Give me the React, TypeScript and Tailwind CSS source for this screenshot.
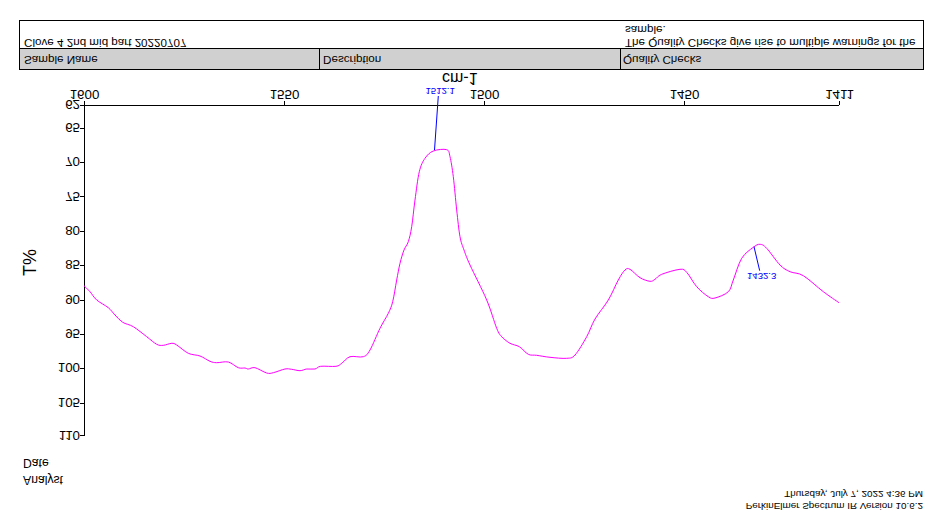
// The scan is upside down, so the page is laid out in reading order and flipped once at the root.
const H = 454; // screen y of the chart's natural top edge

// trace, in reference (screen) coordinates
const trace: [number, number][] = [
  [84, 285.7], [90, 291.7], [96.7, 300], [108.3, 307.7], [115, 315], [122.7, 322.3], [133.3, 326.7],
  [146.7, 336.7], [156.7, 344.3], [163.3, 345.3], [171.7, 343.3], [176.7, 345], [188.3, 353.3], [200, 356],
  [210, 361.3], [216.7, 362.7], [228.3, 362], [238.3, 367.7], [245, 368], [248.3, 369], [255, 367.7],
  [266.7, 373], [273.3, 372.7], [285, 369], [291.7, 369.3], [300, 370.7], [306.7, 369], [315, 369],
  [320.7, 366.3], [336, 366.3], [341.7, 363.3], [350, 356.7], [363.3, 356.7], [370, 350], [380, 328.3],
  [388.3, 313.3], [392.7, 301.7], [396.7, 280], [400, 263.3], [404, 250], [408.3, 241.7], [411.7, 226.7],
  [415, 200], [419.3, 171.7], [425, 158.3], [433.3, 151], [446.7, 149.7], [450, 156.7], [453.3, 176.7],
  [456.7, 210], [460, 236.7], [464, 250], [470, 265], [486.7, 300], [496.7, 328.3], [501.7, 336.7],
  [510, 343.3], [519.3, 346.7], [528.3, 354.3], [536.7, 355.3], [550, 357.3], [566.7, 358.3], [575, 355],
  [586.7, 336.7], [595, 319], [608.3, 300], [618.3, 280], [625, 270], [630, 269.3], [640, 277.7],
  [650, 281.3], [655, 279.3], [661.7, 274.3], [680, 269.3], [686.7, 272.3], [696.7, 286.7], [708.3, 296.7],
  [715, 298], [728.3, 291.7], [733.3, 280], [741.7, 258.3], [753.3, 247.3], [760, 244.3], [766.7, 248.3],
  [780, 265], [790, 271.7], [803.3, 275.7], [823.3, 291.7], [839, 302.7],
];

function smoothPath(points: [number, number][]) {
  let d = `M${points[0][0]} ${H - points[0][1]}`;
  for (let i = 0; i < points.length - 1; i++) {
    const p0 = points[i - 1] ?? points[i];
    const p1 = points[i];
    const p2 = points[i + 1];
    const p3 = points[i + 2] ?? p2;
    const c1x = p1[0] + (p2[0] - p0[0]) / 6;
    const c1y = p1[1] + (p2[1] - p0[1]) / 6;
    const c2x = p2[0] - (p3[0] - p1[0]) / 6;
    const c2y = p2[1] - (p3[1] - p1[1]) / 6;
    d += ` C${c1x} ${H - c1y} ${c2x} ${H - c2y} ${p2[0]} ${H - p2[1]}`;
  }
  return d;
}

const xTicks = [
  { x: 84, label: "1600" },
  { x: 284, label: "1550" },
  { x: 484, label: "1500" },
  { x: 684, label: "1450" },
  { x: 839, label: "1411" },
];

const yTicks = [
  { y: 105, label: "62" },
  { y: 128, label: "65" },
  { y: 162, label: "70" },
  { y: 196.7, label: "75" },
  { y: 231, label: "80" },
  { y: 265, label: "85" },
  { y: 300, label: "90" },
  { y: 334, label: "95" },
  { y: 368, label: "100" },
  { y: 403, label: "105" },
  { y: 435.3, label: "110" },
];

function Chart() {
  return (
    <svg width={936} height={384} viewBox="0 0 936 384" className="block flex-none">
      <g stroke="#000" strokeWidth={1} shapeRendering="crispEdges">
        <line x1={84.5} y1={H - 105} x2={84.5} y2={H - 435.5} />
        <line x1={84} y1={H - 105.5} x2={839} y2={H - 105.5} />
        {xTicks.map((t) => (
          <line key={t.label} x1={t.x + 0.5} y1={H - 105} x2={t.x + 0.5} y2={H - 101} />
        ))}
        {yTicks.map((t) => (
          <line key={t.label} x1={80} y1={H - t.y} x2={84} y2={H - t.y} />
        ))}
      </g>
      <g className="text-[13.33px]" fill="#000">
        {xTicks.map((t) => (
          <text key={t.label} x={t.x + 0.5} y={H - 89.5} textAnchor="middle">
            {t.label}
          </text>
        ))}
        {yTicks.map((t) => (
          <text key={t.label} x={80} y={H - t.y + 4.7} textAnchor="end">
            {t.label}
          </text>
        ))}
      </g>
      <text x={442} y={H - 73} className="text-[16px]" fill="#000">
        cm-1
      </text>
      <text
        transform={`translate(36 ${H - 276}) scale(1 -1) rotate(-90)`}
        className="text-[18px]"
        fill="#000"
      >
        T%
      </text>
      <path d={smoothPath(trace)} fill="none" stroke="#ff00ff" strokeWidth={1} />
      <g stroke="#0000ff" strokeWidth={1}>
        <line x1={438.3} y1={H - 96} x2={434.5} y2={H - 150} />
        <line x1={759.7} y1={H - 270.7} x2={754} y2={H - 246.7} />
      </g>
      <g className="text-[9.6px]" fill="#0000ff">
        <text x={425.5} y={H - 87.5}>1512.1</text>
        <text x={747} y={H - 272.7}>1432.3</text>
      </g>
    </svg>
  );
}

export default function App() {
  return (
    <div className="flex h-[514px] w-[936px] -scale-y-100 flex-col overflow-hidden bg-white font-['Liberation_Sans',Arial,sans-serif] text-black">
      <div className="flex h-[26px] flex-col items-end justify-end pr-[13px] text-[9.9px] leading-[12px]">
        <div>PerkinElmer Spectrum IR Version 10.6.2</div>
        <div>Thursday, July 7, 2022 4:36 PM</div>
      </div>
      <div className="flex h-[34px] flex-col justify-center pl-[23px] text-[12.2px] leading-[17px]">
        <div>Analyst</div>
        <div>Date</div>
      </div>
      <Chart />
      <div className="ml-[19px] w-[905px] border border-black text-[11.65px]">
        <div className="grid h-[20px] grid-cols-[299px_301px_1fr] bg-[#d0d0d0] leading-[18px]">
          <div className="pl-[4px]">Sample Name</div>
          <div className="border-l border-black pl-[3px]">Description</div>
          <div className="border-l border-black pl-[2px]">Quality Checks</div>
        </div>
        <div className="grid h-[28px] grid-cols-[299px_301px_1fr] border-t border-black leading-[13px]">
          <div className="-mt-[2px] pl-[4px]">Clove 4 2nd mid part  20220707</div>
          <div />
          <div className="-mt-[2px] pl-[5px] pr-[6px]">The Quality Checks give rise to multiple warnings for the sample.</div>
        </div>
      </div>
    </div>
  );
}
